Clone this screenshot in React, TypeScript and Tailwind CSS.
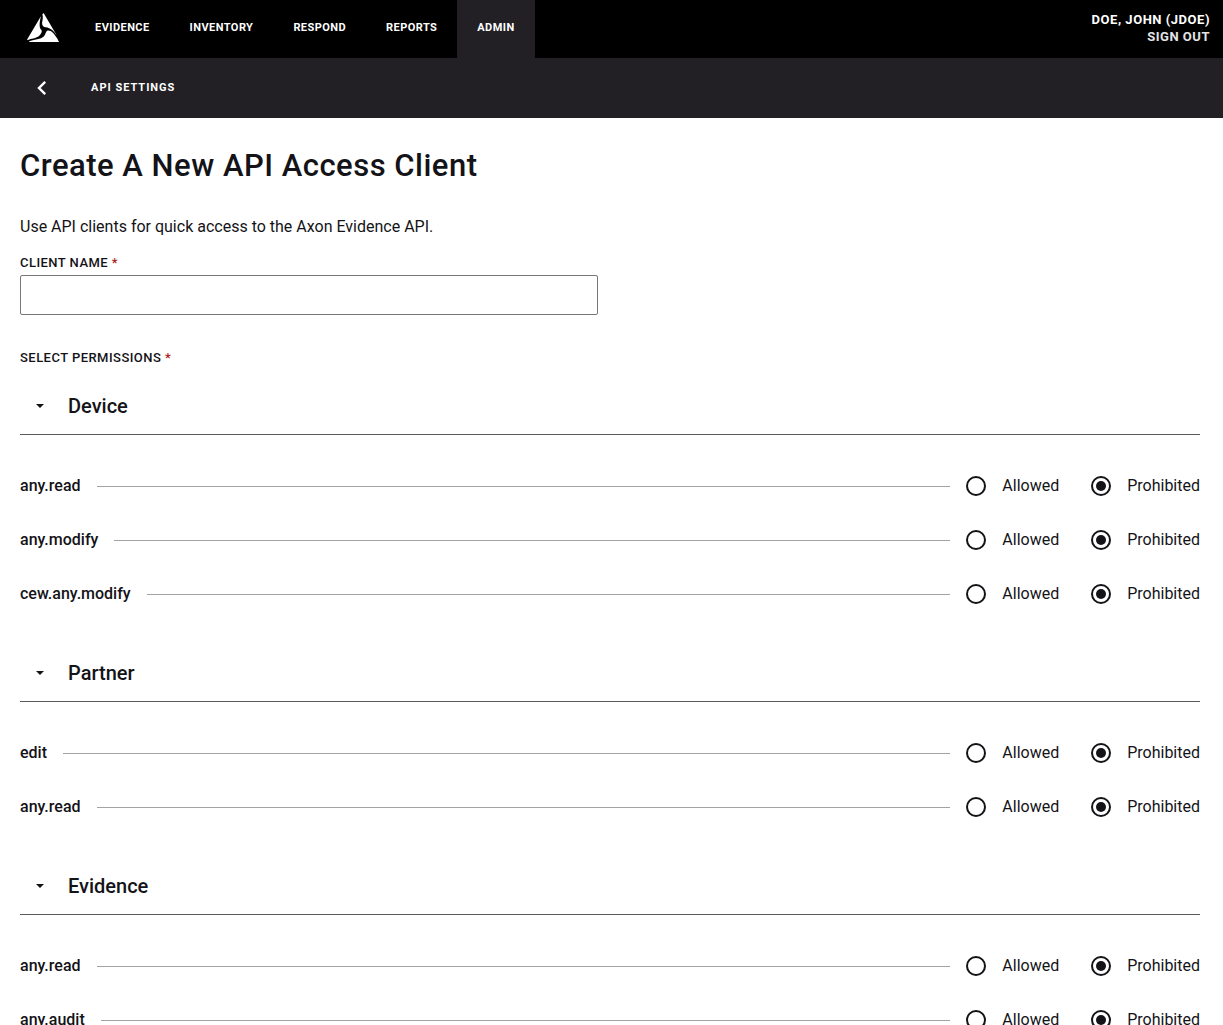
import React, { useState } from 'react';
import clsx from 'clsx';

interface PermissionGroup {
  name: string;
  permissions: string[];
}

const NAV_ITEMS = ['Evidence', 'Inventory', 'Respond', 'Reports', 'Admin'];

const GROUPS: PermissionGroup[] = [
  { name: 'Device', permissions: ['any.read', 'any.modify', 'cew.any.modify'] },
  { name: 'Partner', permissions: ['edit', 'any.read'] },
  { name: 'Evidence', permissions: ['any.read', 'any.audit'] },
];

const Logo: React.FC = () => (
  <svg width="32" height="29" viewBox="0 0 32 29" fill="#fff" aria-hidden="true">
    <path d="M13.9 3.2 L0.4 26 Q-0.2 27.3 1 27 C6 25.2 10.8 25.3 13.3 21.6 C14.8 19.3 15.3 17.9 14 16.6 C11.8 14.5 12.6 8.6 13.9 3.2Z" />
    <path d="M16.6 0 L29.8 22.6 C26.6 17.7 23.6 14.8 18.7 14.2 C15.1 13.5 14.6 11 15.5 7.4 C16.1 4.8 15.8 2.6 15.3 1.6Z" />
    <path d="M2 29 L32 29 L30.3 25.5 C27.3 20.7 24 17 20.9 17.5 C18.7 18 18.9 21.1 17 23.2 C14 26.5 6.5 26.3 2 28.4Z" />
  </svg>
);

const TopNav: React.FC = () => (
  <header className="flex h-[58px] justify-between bg-black text-white">
    <div className="flex">
      <a href="#home" aria-label="Home" className="flex w-[75px] items-start pt-[13px] pl-[27px]">
        <Logo />
      </a>
      <nav className="flex">
        {NAV_ITEMS.map(item => (
          <a
            key={item}
            href={`#${item.toLowerCase()}`}
            className={clsx(
              'flex items-center px-5 pb-[2px] text-[11px] font-bold tracking-[0.04em] uppercase',
              item === 'Admin' && 'bg-[#222025]'
            )}
          >
            {item}
          </a>
        ))}
      </nav>
    </div>
    <div className="flex flex-col items-end pt-[11px] pr-[13px] text-[13px] leading-[17px] font-bold tracking-[0.04em] uppercase">
      <a href="#profile">Doe, John (JDoe)</a>
      <a href="#signout" className="text-[#e4e4e6]">Sign out</a>
    </div>
  </header>
);

const SubNav: React.FC = () => (
  <div className="flex h-[60px] items-center bg-[#222025] text-white">
    <a href="#back" aria-label="Back" className="flex w-[91px] pl-[37px]">
      <svg width="10" height="14" viewBox="0 0 10 14" fill="none" stroke="#fff" strokeWidth="2.4" aria-hidden="true">
        <path d="M8.2 0.9 L2 7 L8.2 13.1" />
      </svg>
    </a>
    <span className="text-[11px] font-bold tracking-[0.09em] uppercase">API Settings</span>
  </div>
);

interface RadioProps {
  name: string;
  label: string;
  checked: boolean;
  onChange: () => void;
}

const Radio: React.FC<RadioProps> = ({ name, label, checked, onChange }) => (
  <label className="flex items-center gap-4">
    <input
      type="radio"
      name={name}
      checked={checked}
      onChange={onChange}
      className="size-5 appearance-none rounded-full border-2 border-[#141318] bg-white bg-clip-content p-[3px] checked:bg-[#141318]"
    />
    <span>{label}</span>
  </label>
);

const PermissionRow: React.FC<{ group: string; permission: string }> = ({ group, permission }) => {
  const [allowed, setAllowed] = useState<boolean>(false);
  const name = `${group}.${permission}`;

  return (
    <div role="radiogroup" aria-label={name} className="flex h-[54px] items-center gap-4">
      <span className="font-medium">{permission}</span>
      <div className="h-px flex-1 bg-[#a3a3a5]" />
      <div className="flex gap-8">
        <Radio name={name} label="Allowed" checked={allowed} onChange={() => setAllowed(true)} />
        <Radio name={name} label="Prohibited" checked={!allowed} onChange={() => setAllowed(false)} />
      </div>
    </div>
  );
};

const PermissionSection: React.FC<{ group: PermissionGroup }> = ({ group }) => {
  const [open, setOpen] = useState<boolean>(true);

  return (
    <section>
      <h2 className="border-b border-[#5b5b5f]">
        <button
          type="button"
          aria-expanded={open}
          onClick={() => setOpen(!open)}
          className="flex h-14 w-full items-center gap-6 pl-4 text-xl font-medium"
        >
          <svg width="8" height="4" viewBox="0 0 8 4" fill="#141318" aria-hidden="true">
            <path d="M0 0 L8 0 L4 4Z" />
          </svg>
          {group.name}
        </button>
      </h2>
      {open && (
        <div className="py-6">
          {group.permissions.map(p => (
            <PermissionRow key={p} group={group.name} permission={p} />
          ))}
        </div>
      )}
    </section>
  );
};

const Required = () => <span className="text-[#a8201a]">*</span>;

const App: React.FC = () => {
  const [clientName, setClientName] = useState<string>('');

  return (
    <div className="min-h-screen bg-white font-[Roboto,sans-serif] text-base text-[#141318]">
      <TopNav />
      <SubNav />

      <main className="pt-7 pr-[23px] pl-5">
        <h1 className="text-[31px] leading-10 font-medium tracking-[0.016em]">Create A New API Access Client</h1>
        <p className="mt-[29px]">Use API clients for quick access to the Axon Evidence API.</p>

        <form>
          <label htmlFor="client-name" className="mt-[14px] block text-[13px] leading-5 font-medium tracking-[0.035em] uppercase">
            Client name <Required />
          </label>
          <input
            id="client-name"
            type="text"
            value={clientName}
            onChange={e => setClientName(e.target.value)}
            className="mt-[2px] block h-10 w-[49%] rounded-[2px] border border-[#77777a] px-3"
          />

          <p className="mt-[33px] mb-[10px] text-[13px] leading-5 font-medium tracking-[0.035em] uppercase">
            Select permissions <Required />
          </p>
          {GROUPS.map(g => (
            <PermissionSection key={g.name} group={g} />
          ))}
        </form>
      </main>
    </div>
  );
};

export default App;
